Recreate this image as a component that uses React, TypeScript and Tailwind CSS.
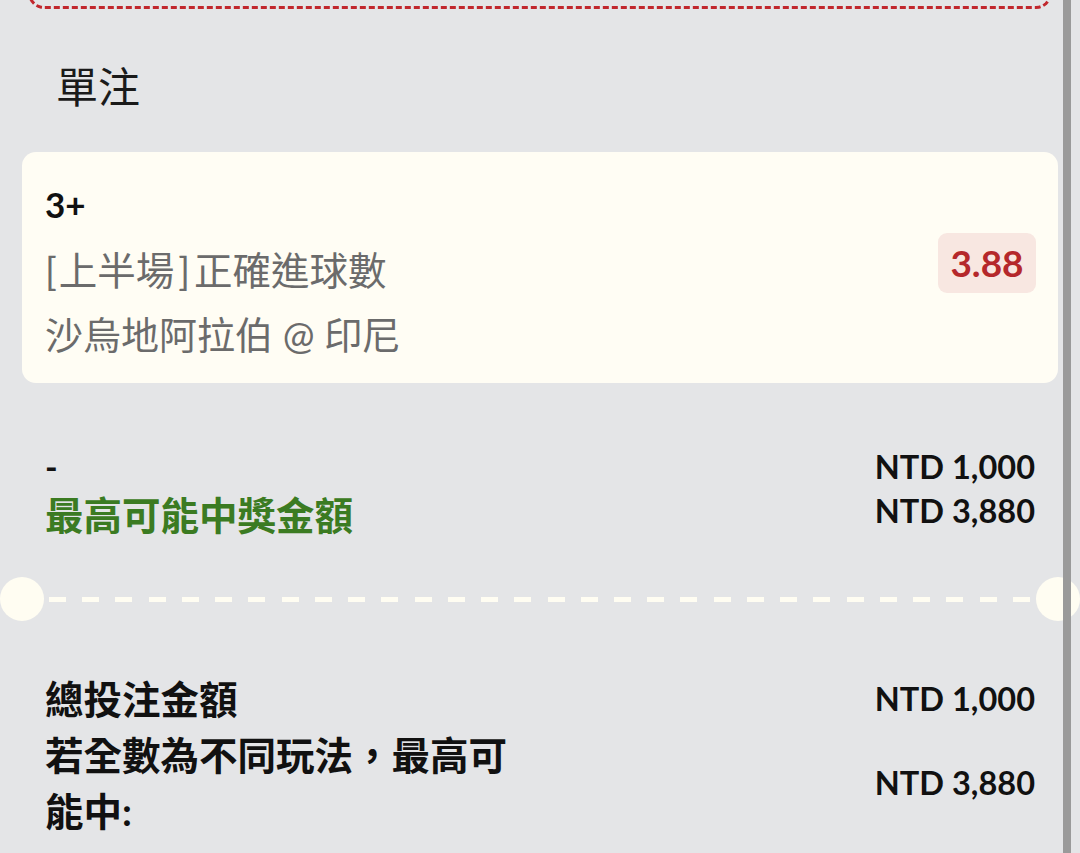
import React from "react";

const font = "font-['Lato','Noto_Sans_CJK_TC',sans-serif]";

const App: React.FC = () => {
  const dashes = Array.from({ length: 30 });
  return (
    <div className={`relative w-[1080px] h-[853px] overflow-hidden bg-[#e4e5e7] text-[#111] ${font}`}>
      {/* bottom edge of the box above */}
      <div className="mx-[28px] h-[60px] -mt-[51px] rounded-[16px] border-[3px] border-dashed border-[#c1272d]" />

      <h2 className="mt-[47px] pl-[56px] text-[42px] leading-[63px] font-normal text-[#1a1a1a]">單注</h2>

      <div className="mx-[22px] mt-[33px] rounded-[14px] bg-[#fffdf4] pl-[23px] pr-[22px] pt-[26px] pb-[17px] flex items-start justify-between">
        <div className="text-[#6b6b6b]">
          <div className="text-[35px] leading-[52px] font-bold text-[#111]">3+</div>
          <div className="mt-[8px] text-[38.5px] leading-[64px]">
            <span className="mr-[2px]">[</span>上半場<span className="mx-[4px]">]</span>正確進球數
          </div>
          <div className="text-[38px] leading-[64px]">沙烏地阿拉伯 @ 印尼</div>
        </div>
        <div className="mt-[55px] w-[98px] h-[60px] rounded-[9px] bg-[#f8e7e1] flex items-center justify-center text-[37px] font-bold text-[#b5282b]">
          3.88
        </div>
      </div>

      <div className="mt-[62px] px-[45px] flex justify-between">
        <div>
          <div className="text-[34px] leading-[44px] font-bold">-</div>
          <div className="text-[38.5px] leading-[52px] font-bold text-[#3b7b22]">最高可能中獎金額</div>
        </div>
        <div className="text-right text-[32.5px] leading-[44px] font-bold">
          <div>NTD 1,000</div>
          <div>NTD 3,880</div>
        </div>
      </div>

      <div className="mt-[36px] h-[44px] flex items-center">
        <div className="w-[44px] h-[44px] rounded-full bg-[#fffdf2]" />
        <div className="flex-1 pl-[5px] pr-[6px] flex justify-between">
          {dashes.map((_, i) => (
            <div key={i} className="w-[17px] h-[5px] bg-[#fffdf2]" />
          ))}
        </div>
        <div className="w-[44px] h-[44px] rounded-full bg-[#fffdf2]" />
      </div>

      <div className="mt-[50px] px-[45px] text-[38.5px] leading-[56px] font-bold">
        <div className="flex items-center justify-between">
          <div>總投注金額</div>
          <div className="text-[32.5px]">NTD 1,000</div>
        </div>
        <div className="flex items-center justify-between">
          <div className="w-[480px]">若全數為不同玩法，最高可能中:</div>
          <div className="text-[32.5px]">NTD 3,880</div>
        </div>
      </div>

      {/* scrollbar */}
      <div className="absolute top-0 bottom-0 left-[1063px] w-[8px] bg-[#9a9a9a]" />
    </div>
  );
};

export default App;
